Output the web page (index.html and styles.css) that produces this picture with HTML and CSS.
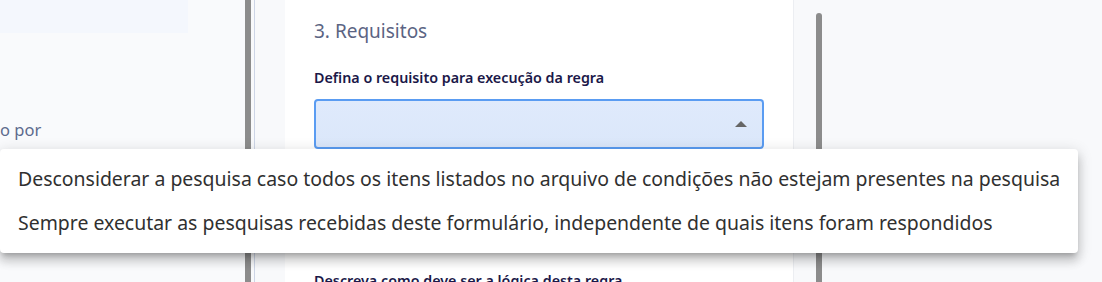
FILE: index.html
```
<!DOCTYPE html>
<html lang="pt-BR">
<head>
    <meta charset="UTF-8">
    <meta name="viewport" content="width=device-width, initial-scale=1.0">
    <title>Regras - Requisitos</title>
    <link rel="stylesheet" href="styles.css">
</head>
<body>
    <div class="app">
        <aside class="side">
            <div class="side-banner"></div>
            <p class="side-text">o por</p>
        </aside>
        <div class="side-thumb"></div>
        <div class="side-rule"></div>

        <main class="stage">
            <section class="card">
                <h3 class="card-title">3. Requisitos</h3>
                <label class="field-label">Defina o requisito para execução da regra</label>
                <div class="select">
                    <span class="select-arrow"></span>
                </div>
                <label class="field-label lower">Descreva como deve ser a lógica desta regra</label>
            </section>
            <div class="stage-rest">
                <div class="stage-thumb"></div>
            </div>
        </main>
    </div>

    <ul class="menu">
        <li class="menu-item">Desconsiderar a pesquisa caso todos os itens listados no arquivo de condições não estejam presentes na pesquisa</li>
        <li class="menu-item">Sempre executar as pesquisas recebidas deste formulário, independente de quais itens foram respondidos</li>
    </ul>
</body>
</html>
```

FILE: styles.css
```
body {
    margin: 0;
    height: 282px;
    overflow: hidden;
    font-family: "Noto Sans", sans-serif;
    background: #f8f9fb;
}

.app {
    display: flex;
    height: 282px;
}

.side {
    width: 245px;
    background: #f9fafc;
    overflow: hidden;
}

.side-banner {
    width: 188px;
    height: 33px;
    background: #f4f7fd;
}

.side-text {
    margin: 86px 0 0;
    font-size: 16.5px;
    line-height: 22px;
    color: #5d6b8d;
}

.side-thumb {
    width: 6px;
    background: #8c8c8c;
}

.side-rule {
    width: 1px;
    margin-left: 3px;
    background: #cdd5e6;
}

.stage {
    flex: 1;
    display: flex;
    padding-left: 30px;
}

.card {
    width: 450px;
    padding: 0 29px;
    background: #fff;
    border-right: 1px solid #eceef2;
}

.card-title {
    margin: 17px 0 0;
    font-size: 19px;
    line-height: 28px;
    font-weight: 400;
    color: #5b6483;
}

.field-label {
    display: block;
    margin-top: 23px;
    font-size: 14.3px;
    line-height: 20px;
    font-weight: 600;
    color: #1b1848;
}

.select {
    display: flex;
    align-items: center;
    justify-content: flex-end;
    height: 46px;
    margin-top: 11px;
    padding: 0 15px;
    border: 2px solid #5a9cf2;
    border-radius: 4px;
    background: linear-gradient(#dfeafc, #dbe7fa);
}

.select-arrow {
    width: 0;
    height: 0;
    border-left: 6px solid transparent;
    border-right: 6px solid transparent;
    border-bottom: 6px solid #666;
}

.field-label.lower {
    margin-top: 122px;
}

.stage-rest {
    flex: 1;
    padding-left: 22px;
}

.stage-thumb {
    width: 6px;
    height: 280px;
    margin-top: 13px;
    border-radius: 3px 3px 0 0;
    background: #8c8c8c;
}

.menu {
    position: absolute;
    top: 149px;
    left: 0;
    width: 1078px;
    margin: 0;
    padding: 8px 0;
    list-style: none;
    background: #fff;
    border-radius: 4px;
    box-shadow: 0 5px 5px -3px rgba(0, 0, 0, .2), 0 8px 10px 1px rgba(0, 0, 0, .14), 0 3px 14px 2px rgba(0, 0, 0, .12);
}

.menu-item {
    padding: 0 18px;
    font-size: 19.45px;
    line-height: 44px;
    color: #303030;
    white-space: nowrap;
}
```
